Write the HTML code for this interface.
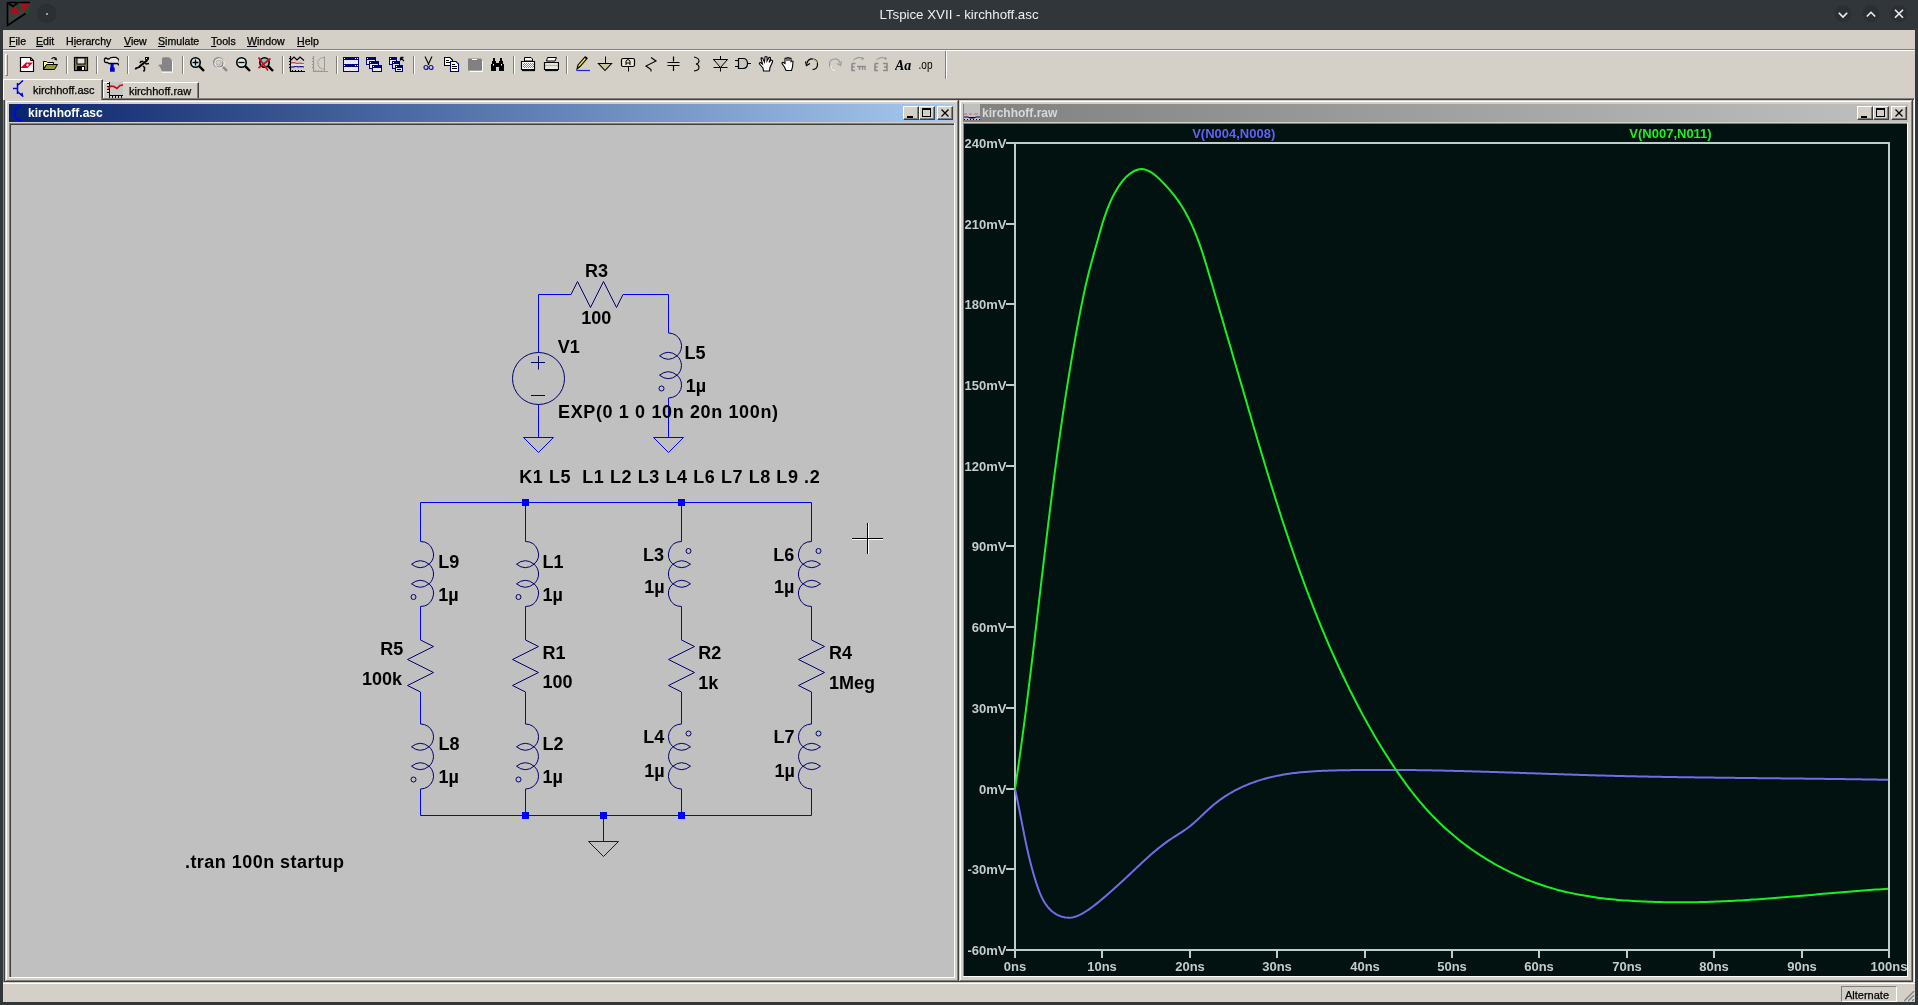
<!DOCTYPE html>
<html><head><meta charset="utf-8"><title>LTspice XVII - kirchhoff.asc</title>
<style>
*{box-sizing:border-box}
html,body{margin:0;padding:0}
body{-webkit-font-smoothing:antialiased;width:1918px;height:1005px;background:#31363b;position:relative;overflow:hidden;font-family:"Liberation Sans",sans-serif}
.a{position:absolute}
#titlebar{left:0;top:0;width:1918px;height:30px;background:#31363b}
#ttl{left:0;top:0;width:1918px;text-align:center;color:#eff0f1;font-size:13.3px;line-height:30px;top:-0.5px}
.kb{width:17px;height:17px;border-radius:50%;background:#2c3035;box-shadow:0 0 0 1px #2a2e32}
#app{left:3px;top:30px;width:1912px;height:972px;background:#d4d0c8}
.menu{font-size:10.6px;color:#000;top:35px;line-height:12px;-webkit-text-stroke:0.25px #000}
.menu u{text-decoration:underline;text-underline-offset:1px}
.sep{width:2px;height:18px;border-left:1px solid #808080;border-right:1px solid #fff;top:56px}
.ic{top:56px;width:16px;height:16px}
.win{background:#d4d0c8;border-top:1px solid #d4d0c8;border-left:1px solid #d4d0c8;border-right:1px solid #404040;border-bottom:1px solid #404040}
.win>.in{position:absolute;left:0;top:0;right:0;bottom:0;border-top:1px solid #fff;border-left:1px solid #fff;border-right:1px solid #808080;border-bottom:1px solid #808080}
.tb{height:18px}
.cap{font-size:12px;font-weight:bold;line-height:18px}
.btn{width:16px;height:14px;background:#d4d0c8;border-top:1px solid #fff;border-left:1px solid #fff;border-right:1px solid #404040;border-bottom:1px solid #404040;box-shadow:inset -1px -1px 0 #808080}
</style></head>
<body>
<div id="root" style="position:absolute;left:0;top:0;width:1918px;height:1005px;will-change:transform">
<div id="titlebar" class="a"></div>
<div id="ttl" class="a">LTspice XVII - kirchhoff.asc</div>
<!-- app icon -->
<svg class="a" style="left:0;top:0" width="34" height="30" viewBox="0 0 34 30">
 <path d="M7.5,2.5 H30 L24.5,13.5 L7.5,25.5 Z" fill="#3c403e"/>
 <path d="M8.5,3.5 L14,7 L11,12 Z M16,5 L19,4 L22,10 L17,10 Z M26,6 L31,3 L29,14 L25,15 Z" fill="#1e4a30"/>
 <path d="M10,13.5 H20 L16,7 H12.5 Z" fill="#a30f1f"/>
 <path d="M19.5,2.5 H30.5 L24,12.8 Z" fill="#a30f1f"/>
 <path d="M7.5,2.5 V25.5 L25.5,13.5 M7.5,2.5 H30 M7.5,2.5 L13,6.5 L18,2.5" fill="none" stroke="#000" stroke-width="1.7"/>
</svg>
<div class="a kb" style="left:38px;top:5px"></div>
<div class="a" style="left:46px;top:13px;width:2px;height:2px;background:#9aa0a6"></div>
<svg class="a" style="left:1830px;top:2px" width="85" height="26" viewBox="0 0 85 26">
 <circle cx="13" cy="11.7" r="8.5" fill="#2b2f34"/>
 <circle cx="41" cy="11.7" r="8.5" fill="#2b2f34"/>
 <circle cx="69" cy="11.7" r="8.5" fill="#2b2f34"/>
 <polyline points="8.8,10.8 13,15 17.2,10.8" stroke="#f0f0f0" stroke-width="1.6" fill="none"/>
 <polyline points="36.8,14.5 41,10.3 45.2,14.5" stroke="#f0f0f0" stroke-width="1.6" fill="none"/>
 <path d="M65,7.7 L73,15.7 M73,7.7 L65,15.7" stroke="#f0f0f0" stroke-width="1.6"/>
</svg>

<div id="app" class="a"></div>
<!-- menu -->
<div class="a menu" style="left:9px"><u>F</u>ile</div>
<div class="a menu" style="left:36px"><u>E</u>dit</div>
<div class="a menu" style="left:66px">H<u>i</u>erarchy</div>
<div class="a menu" style="left:124px"><u>V</u>iew</div>
<div class="a menu" style="left:158px"><u>S</u>imulate</div>
<div class="a menu" style="left:211px"><u>T</u>ools</div>
<div class="a menu" style="left:247px"><u>W</u>indow</div>
<div class="a menu" style="left:297px"><u>H</u>elp</div>
<div class="a" style="left:3px;top:49px;width:1912px;height:1px;background:#808080"></div>
<div class="a" style="left:3px;top:50px;width:1912px;height:1px;background:#fff"></div>
<!-- toolbar grip -->
<div class="a" style="left:5px;top:54px;width:3px;height:22px;border-left:1px solid #fff;border-top:1px solid #fff;border-right:1px solid #808080;border-bottom:1px solid #808080"></div>
<div class="a" style="left:945px;top:51px;width:2px;height:28px;border-left:1px solid #808080;border-right:1px solid #fff"></div>
<svg class="a" style="left:19px;top:55px" width="16" height="18" viewBox="0 0 16 18"><path d="M1.5,2.5 H11.5 L14.5,5.5 V16.5 H1.5 Z" fill="#fff" stroke="#000" stroke-width="1.2"/>
<path d="M11.5,2.5 V5.5 H14.5" fill="none" stroke="#000"/>
<path d="M7,7.5 H14 L8.5,13 H1.5 Z" fill="#e00020"/>
<path d="M8.5,8.5 L10,10 L8.5,11.5 L7,10 Z" fill="#fff"/></svg>
<svg class="a" style="left:42px;top:55px" width="16" height="18" viewBox="0 0 16 18"><path d="M1.5,6.5 H4.5 L5.5,7.5 H11.5 V9.5 H4.5 L1.5,14.5 Z" fill="#ffff99" stroke="#000"/>
<path d="M1.5,14.5 L4.5,9.5 H15.5 L12.5,14.5 Z" fill="#999933" stroke="#000"/>
<path d="M1.5,6.5 V14.5" stroke="#000"/>
<path d="M9.5,4 Q11.5,1.5 14,3.5" fill="none" stroke="#000" stroke-width="1.2"/>
<path d="M12,4.5 L15,5.5 L14.5,2.5 Z" fill="#000"/></svg>
<div class="a" style="left:66px;top:56px;width:1px;height:18px;background:#808080"></div><div class="a" style="left:67px;top:56px;width:1px;height:18px;background:#fff"></div>
<svg class="a" style="left:73px;top:55px" width="16" height="18" viewBox="0 0 16 18"><rect x="1.5" y="2.5" width="13" height="13" fill="#808040" stroke="#000" stroke-width="1.2"/>
<rect x="4" y="3" width="8" height="6" fill="#e0e0e0" stroke="#000"/>
<rect x="4" y="11" width="8" height="4.5" fill="#000"/>
<rect x="9" y="12" width="2" height="3" fill="#fff"/></svg>
<div class="a" style="left:96px;top:56px;width:1px;height:18px;background:#808080"></div><div class="a" style="left:97px;top:56px;width:1px;height:18px;background:#fff"></div>
<svg class="a" style="left:103px;top:55px" width="16" height="18" viewBox="0 0 16 18"><path d="M1.5,4.5 Q1.5,3 3,3 L4.5,4 H6 Q7,2.3 10,2.3 H13 L15.8,4.5 L16.5,7 V10.5 L14.5,8.5 H6 L4.5,7.5 H3 Q1.5,7.5 1.5,6 Z" fill="#e4e4e4" stroke="#000" stroke-width="1.3"/>
<path d="M7.5,9 H10.7 V12.5 H11.7 V16.8 H7 V12.5 H7.5 Z" fill="#0000c8"/></svg>
<div class="a" style="left:127px;top:56px;width:1px;height:18px;background:#808080"></div><div class="a" style="left:128px;top:56px;width:1px;height:18px;background:#fff"></div>
<svg class="a" style="left:134px;top:55px" width="16" height="18" viewBox="0 0 16 18"><rect x="11" y="2" width="4" height="2.8" fill="#000"/><rect x="12" y="3" width="1" height="1" fill="#fff"/>
<path d="M13.5,5 L5,12" stroke="#000" stroke-width="2.2"/>
<path d="M9.5,6.5 L7,6.5 L5.8,8" fill="none" stroke="#000" stroke-width="1.4"/>
<path d="M11.5,8 L12,9 L15,8.5" fill="none" stroke="#000" stroke-width="1.4"/>
<path d="M6,12 L2,13.2 L1.5,14.5" fill="none" stroke="#000" stroke-width="1.6"/>
<path d="M9,11 L10.5,12.5 L10.5,15 L9.5,16.5" fill="none" stroke="#000" stroke-width="1.5"/>
<path d="M3.5,5 L5,6 M5,3 L6.5,4" stroke="#b8b8b8" stroke-width="0.9"/></svg>
<svg class="a" style="left:157px;top:55px" width="16" height="18" viewBox="0 0 16 18"><path d="M5,3.5 Q5.5,2.3 7,2.3 H11 Q13,2.3 14,4 L15,6 V16.5 H5 L3,11.8 L1.3,10.5 L2.5,9.5 L5,9.5 Z" fill="#858585"/>
<path d="M15.5,6 V17.2 H5" fill="none" stroke="#fff"/></svg>
<div class="a" style="left:182px;top:56px;width:1px;height:18px;background:#808080"></div><div class="a" style="left:183px;top:56px;width:1px;height:18px;background:#fff"></div>
<svg class="a" style="left:189px;top:55px" width="16" height="18" viewBox="0 0 16 18"><circle cx="6.5" cy="7.5" r="4.7" fill="#d0e8e8" stroke="#000" stroke-width="1.6"/>
<path d="M10.2,11.2 L15,16" stroke="#000" stroke-width="2.4"/><path d="M6.5,4.5 V10.5 M3.5,7.5 H9.5" stroke="#000" stroke-width="1.3"/></svg>
<svg class="a" style="left:212px;top:55px" width="16" height="18" viewBox="0 0 16 18"><circle cx="6.5" cy="7.5" r="4.7" fill="none" stroke="#888" stroke-width="1.6"/>
<path d="M10.2,11.2 L15,16" stroke="#888" stroke-width="2.4"/><circle cx="7.5" cy="8.5" r="4.6" fill="none" stroke="#fff" stroke-width="1"/><circle cx="6.5" cy="7.5" r="2.5" fill="none" stroke="#aaa" stroke-width="0.8"/></svg>
<svg class="a" style="left:235px;top:55px" width="16" height="18" viewBox="0 0 16 18"><circle cx="6.5" cy="7.5" r="4.7" fill="#d0e8e8" stroke="#000" stroke-width="1.6"/>
<path d="M10.2,11.2 L15,16" stroke="#000" stroke-width="2.4"/><path d="M3.5,7.5 H9.5" stroke="#000" stroke-width="1.3"/></svg>
<svg class="a" style="left:258px;top:55px" width="16" height="18" viewBox="0 0 16 18"><circle cx="6.5" cy="7.5" r="4.7" fill="#70d0c0" stroke="#000" stroke-width="1.6"/>
<path d="M10.2,11.2 L15,16" stroke="#000" stroke-width="2.4"/><path d="M0.5,2.5 L10,15.5 M12.5,3.5 L0.5,13" stroke="#e00020" stroke-width="1.6"/></svg>
<div class="a" style="left:282px;top:56px;width:1px;height:18px;background:#808080"></div><div class="a" style="left:283px;top:56px;width:1px;height:18px;background:#fff"></div>
<svg class="a" style="left:289px;top:55px" width="16" height="18" viewBox="0 0 16 18"><path d="M1.5,1 V16.5 H16" fill="none" stroke="#000" stroke-width="1.2"/>
<path d="M0,3.5h2 M0,6.5h2 M0,9.5h2 M0,12.5h2 M3.5,15v2 M6.5,15v2 M9.5,15v2 M12.5,15v2" stroke="#000"/>
<polyline points="2,5 5,2 8,5 11,2 15,5.5" fill="none" stroke="#000" stroke-width="1.1"/>
<polyline points="2,8 5,7.5 8,8.5 11,8 15,9" fill="none" stroke="#e03030" stroke-width="1.2"/>
<polyline points="2,12 5,12 7,11 9,12 12,11.5 15,12" fill="none" stroke="#000080" stroke-width="1.2"/>
<rect x="2" y="9" width="13" height="2" fill="#e8d8e8"/></svg>
<svg class="a" style="left:312px;top:55px" width="16" height="18" viewBox="0 0 16 18"><path d="M1.5,1 V16.5 H16" fill="none" stroke="#999" stroke-width="1.2"/>
<path d="M0,3.5h2 M0,6.5h2 M0,9.5h2 M0,12.5h2 M3.5,15v2 M6.5,15v2 M9.5,15v2 M12.5,15v2" stroke="#999"/>
<path d="M12,2.5 Q5,3 6,9 Q7,14 12,14" fill="none" stroke="#999" stroke-width="1.1" stroke-dasharray="1.5,0.7"/>
<path d="M12.5,1.5 V15" stroke="#999"/></svg>
<div class="a" style="left:336px;top:56px;width:1px;height:18px;background:#808080"></div><div class="a" style="left:337px;top:56px;width:1px;height:18px;background:#fff"></div>
<svg class="a" style="left:343px;top:55px" width="16" height="18" viewBox="0 0 16 18"><g shape-rendering="crispEdges"><rect x="0" y="2" width="16" height="8" fill="#000080"/><rect x="1" y="5" width="14" height="4" fill="#e8e8f4"/><rect x="1" y="3" width="1" height="1" fill="#fff"/><rect x="12" y="3" width="1" height="1" fill="#fff"/><rect x="14" y="3" width="1" height="1" fill="#fff"/><rect x="0" y="9" width="16" height="8" fill="#000080"/><rect x="1" y="12" width="14" height="4" fill="#e8e8f4"/><rect x="1" y="10" width="1" height="1" fill="#fff"/><rect x="12" y="10" width="1" height="1" fill="#fff"/><rect x="14" y="10" width="1" height="1" fill="#fff"/></g></svg>
<svg class="a" style="left:366px;top:55px" width="16" height="18" viewBox="0 0 16 18"><g shape-rendering="crispEdges"><rect x="0" y="2" width="10" height="8" fill="#000080"/><rect x="1" y="5" width="8" height="4" fill="#e8e8f4"/><rect x="1" y="3" width="1" height="1" fill="#fff"/><rect x="3" y="6" width="10" height="8" fill="#000080"/><rect x="4" y="9" width="8" height="4" fill="#e8e8f4"/><rect x="4" y="7" width="1" height="1" fill="#fff"/><rect x="6" y="10" width="10" height="7" fill="#000080"/><rect x="7" y="13" width="8" height="3" fill="#e8e8f4"/><rect x="7" y="11" width="1" height="1" fill="#fff"/></g></svg>
<svg class="a" style="left:389px;top:55px" width="16" height="18" viewBox="0 0 16 18"><g shape-rendering="crispEdges"><rect x="0" y="2" width="8" height="8" fill="#000080"/><rect x="1" y="5" width="6" height="4" fill="#e8e8f4"/><rect x="1" y="3" width="1" height="1" fill="#fff"/><rect x="3" y="6" width="8" height="8" fill="#000080"/><rect x="4" y="9" width="6" height="4" fill="#e8e8f4"/><rect x="4" y="7" width="1" height="1" fill="#fff"/><rect x="6" y="10" width="8" height="7" fill="#000080"/><rect x="7" y="13" width="6" height="3" fill="#e8e8f4"/><rect x="7" y="11" width="1" height="1" fill="#fff"/><rect x="8" y="14" width="4" height="1" fill="#000"/></g><path d="M11.5,2.5 L15,6 M11.5,2.5 V5.5 M11.5,2.5 H14.5" stroke="#000" stroke-width="1.3" fill="none"/></svg>
<div class="a" style="left:413px;top:56px;width:1px;height:18px;background:#808080"></div><div class="a" style="left:414px;top:56px;width:1px;height:18px;background:#fff"></div>
<svg class="a" style="left:421px;top:55px" width="16" height="18" viewBox="0 0 16 18"><path d="M4,1.5 L8,10 M11,1.5 L7,10" stroke="#000" stroke-width="1.1"/>
<circle cx="5" cy="12.5" r="2" fill="none" stroke="#1010a0" stroke-width="1.2"/>
<circle cx="10" cy="12.5" r="2" fill="none" stroke="#1010a0" stroke-width="1.2"/></svg>
<svg class="a" style="left:444px;top:55px" width="16" height="18" viewBox="0 0 16 18"><path d="M0.5,2.5 H6 L8.5,5 V10.5 H0.5 Z" fill="#fff" stroke="#000" stroke-width="1.1"/>
<path d="M2,5.5h3 M2,7.5h4" stroke="#000"/>
<path d="M6.5,6.5 H12 L14.5,9 V16.5 H6.5 Z" fill="#fff" stroke="#000080" stroke-width="1.1"/>
<path d="M8,9.5h3 M8,11.5h5 M8,13.5h5" stroke="#000"/></svg>
<svg class="a" style="left:467px;top:55px" width="16" height="18" viewBox="0 0 16 18"><path d="M1,3.5 H14 L15,5 V15.5 H1 Z" fill="#808080"/>
<path d="M5,4.5h5" stroke="#fff"/><path d="M15.5,6 V16.5 H3" fill="none" stroke="#fff"/></svg>
<svg class="a" style="left:490px;top:55px" width="16" height="18" viewBox="0 0 16 18"><path d="M3,3 h2 v3 h1 v2 h3 v-2 h1 v-3 h2 v3 h1 v3 h1 v7 h-5 v-4 h-3 v4 h-5 v-7 h1 v-3 h1 z" fill="#000"/>
<path d="M3.5,9 v1.5 M11.5,9 v1.5" stroke="#fff"/></svg>
<div class="a" style="left:513px;top:56px;width:1px;height:18px;background:#808080"></div><div class="a" style="left:514px;top:56px;width:1px;height:18px;background:#fff"></div>
<svg class="a" style="left:520px;top:55px" width="16" height="18" viewBox="0 0 16 18"><defs><pattern id="hp" width="2" height="2" patternUnits="userSpaceOnUse"><rect width="1" height="1" fill="#000"/><rect x="1" y="1" width="1" height="1" fill="#000"/></pattern></defs>
<path d="M4.5,2.5 H11 L12.5,4 V6 H4.5 Z" fill="#fff" stroke="#000"/>
<path d="M1.5,6.5 H14.5 V14.5 H1.5 Z" fill="#fff" stroke="#000" stroke-width="1.2"/>
<rect x="3" y="8" width="11" height="5" fill="url(#hp)" opacity="0.45"/>
<path d="M2,15.5 H15" stroke="#000" stroke-width="1.3"/></svg>
<svg class="a" style="left:543px;top:55px" width="16" height="18" viewBox="0 0 16 18"><path d="M4.5,2.5 L13.5,2.5 L12,6 H3.5 Z" fill="#fff" stroke="#000"/>
<path d="M1.5,7.5 H15.5 V14.5 H1.5 Z" fill="#e8e8e8" stroke="#000" stroke-width="1.2"/>
<path d="M2,10.5 H15" stroke="#c0c040" stroke-width="1.2"/>
<path d="M2,15.5 H15" stroke="#000" stroke-width="1.2"/></svg>
<div class="a" style="left:566px;top:56px;width:1px;height:18px;background:#808080"></div><div class="a" style="left:567px;top:56px;width:1px;height:18px;background:#fff"></div>
<svg class="a" style="left:575px;top:55px" width="16" height="18" viewBox="0 0 16 18"><path d="M2,14 L3,10 L10,2 L12,3.5 L5,11.5 Z" fill="#f0e040" stroke="#000" stroke-width="1.1"/>
<path d="M10,2 L12,3.5" stroke="#000" stroke-width="1.6"/>
<path d="M1.5,15.5 H15" stroke="#2020e0" stroke-width="1.2"/></svg>
<svg class="a" style="left:597px;top:55px" width="16" height="18" viewBox="0 0 16 18"><path d="M8.5,1.5 V8" stroke="#000"/>
<path d="M1.5,8.5 H14.5 L8,15.5 Z" fill="#c8c8a0" stroke="#000" stroke-width="1.1"/></svg>
<svg class="a" style="left:620px;top:55px" width="16" height="18" viewBox="0 0 16 18"><rect x="1.5" y="3.5" width="13" height="8" rx="1.5" fill="#e8e8c8" stroke="#000" stroke-width="1.2"/>
<path d="M8.5,11.5 V16.5" stroke="#000"/>
<path d="M6,10 V6 L7,4.8 H9 L10,6 V10 M6,8 H10" fill="none" stroke="#000"/></svg>
<svg class="a" style="left:643px;top:55px" width="16" height="18" viewBox="0 0 16 18"><polyline points="8,2.5 13,6 3,11 8,14.5 8,16.5" fill="none" stroke="#000" stroke-width="1.1"/></svg>
<svg class="a" style="left:666px;top:55px" width="16" height="18" viewBox="0 0 16 18"><path d="M7.5,1.5 V6.5 M7.5,10.5 V16 M1.5,7.5 H13.5 M1.5,10.5 H13.5" stroke="#000" stroke-width="1.2"/></svg>
<svg class="a" style="left:689px;top:55px" width="16" height="18" viewBox="0 0 16 18"><path d="M5,2 Q10,3 10,6 Q10,8.5 7,9 Q10,9.5 10,12.5 Q10,15.5 5,16" fill="none" stroke="#000" stroke-width="1.1"/></svg>
<svg class="a" style="left:712px;top:55px" width="16" height="18" viewBox="0 0 16 18"><path d="M8.5,1 V16.5 M1,4.5 H15.5 M1.5,12.5 H15.5" stroke="#000" stroke-width="1"/>
<path d="M1.5,4.5 H15.5 L8.5,12.5 Z" fill="#c8c8c0" stroke="#000"/></svg>
<svg class="a" style="left:735px;top:55px" width="16" height="18" viewBox="0 0 16 18"><path d="M3.5,3.5 H8 Q12.5,3.5 12.5,8.5 Q12.5,13.5 8,13.5 H3.5 Z" fill="#c8c8c0" stroke="#000" stroke-width="1.2"/>
<path d="M0,5.5 H3 M0,11.5 H3 M12.5,8.5 H16" stroke="#000"/></svg>
<svg class="a" style="left:758px;top:55px" width="16" height="18" viewBox="0 0 16 18"><path d="M5,13 L1.5,9 Q1,7.5 2.5,7.5 L4.5,9 L3,3.5 Q3,2.5 4.5,3 L6.5,7 L7,2 Q8,1 9,2 L9,6 L11,2.5 Q12.5,2 12.5,3.5 L11,7.5 L13,5 Q15,5 14.5,7 L12,12.5 L11.5,16 H5.5 Z" fill="#fff" stroke="#000" stroke-width="1.1"/></svg>
<svg class="a" style="left:781px;top:55px" width="16" height="18" viewBox="0 0 16 18"><path d="M3.5,12 L1,8.5 Q1,7 2.5,7.5 L4,8.5 V3.5 Q5,2.5 6,3.5 V6 V3 Q7,2 8,3 V6 V3.5 Q9,2.5 10,3.5 V6.5 Q11,5.5 12,6.5 L11.5,12 L10.5,15.5 H5 Z" fill="#fff" stroke="#000" stroke-width="1.1"/></svg>
<svg class="a" style="left:804px;top:55px" width="16" height="18" viewBox="0 0 16 18"><path d="M3,8.5 Q4,3.5 9,4 Q14,5 13.5,10 Q13,14.5 8.5,14.5" fill="none" stroke="#000" stroke-width="1.2"/>
<path d="M9,4 Q12,5 13,8" fill="none" stroke="#c0c080" stroke-width="1.2"/>
<path d="M1.5,6.5 L2.5,10.5 L6,8.5" fill="none" stroke="#000" stroke-width="1.2"/></svg>
<svg class="a" style="left:827px;top:55px" width="16" height="18" viewBox="0 0 16 18"><path d="M13,8.5 Q12,3.5 7,4 Q2,5 2.5,10 Q3,14.5 7.5,14.5" fill="none" stroke="#9a9a9a" stroke-width="1.2"/>
<path d="M14.5,6.5 L13.5,10.5 L10,8.5" fill="none" stroke="#9a9a9a" stroke-width="1.2"/>
<path d="M3.5,11 Q4,15 8,15.5" fill="none" stroke="#fff"/></svg>
<svg class="a" style="left:850px;top:55px" width="16" height="18" viewBox="0 0 16 18"><path d="M2,8.5 H5.5 M2,8.5 V15.5 H5 M2,12 H4.5" fill="none" stroke="#8a8a8a" stroke-width="1.6"/>
<path d="M7,11.5 H15 V15 M9.5,11.5 V15 M12.5,11.5 V15" fill="none" stroke="#8a8a8a" stroke-width="1.3"/>
<path d="M3.5,5 Q8,1 13,3.5" fill="none" stroke="#8a8a8a"/><path d="M11.5,5 L14,4 L12.5,2 Z" fill="#8a8a8a"/></svg>
<svg class="a" style="left:873px;top:55px" width="16" height="18" viewBox="0 0 16 18"><path d="M2,8.5 H5.5 M2,8.5 V15.5 H5 M2,12 H4.5" fill="none" stroke="#8a8a8a" stroke-width="1.6"/>
<path d="M10,8.5 H14 V15.5 H10 M11,12 H14" fill="none" stroke="#8a8a8a" stroke-width="1.6"/>
<path d="M3.5,5 Q8,1 13,3.5" fill="none" stroke="#8a8a8a"/><path d="M11.5,5 L14,4 L12.5,2 Z" fill="#8a8a8a"/></svg>
<svg class="a" style="left:895px;top:55px" width="18" height="18" viewBox="0 0 18 18"><text x="0" y="15" font-family="Liberation Serif" font-style="italic" font-weight="bold" font-size="14" fill="#000">Aa</text></svg>
<svg class="a" style="left:918px;top:55px" width="18" height="18" viewBox="0 0 18 18"><text x="0.5" y="14" font-family="Liberation Sans" font-size="12" fill="#000" textLength="14" lengthAdjust="spacingAndGlyphs">.op</text></svg>
<!-- tabs -->
<div class="a" style="left:3px;top:99px;width:1912px;height:1px;background:#808080"></div>
<div class="a" style="left:103px;top:82px;width:96px;height:17px;background:#d4d0c8;border-top:1px solid #fff;border-left:1px solid #fff;border-right:1px solid #404040;box-shadow:inset -1px 0 0 #808080"></div>
<div class="a" style="left:3px;top:79px;width:100px;height:22px;background:#d4d0c8;border-top:1px solid #fff;border-left:1px solid #fff;border-right:1px solid #404040;box-shadow:inset -1px 0 0 #808080"></div>
<div class="a" style="left:33px;top:84px;font-size:11px;line-height:12px;-webkit-text-stroke:0.25px #000">kirchhoff.asc</div>
<div class="a" style="left:129px;top:85px;font-size:11px;line-height:12px;-webkit-text-stroke:0.25px #000">kirchhoff.raw</div>
<svg class="a" style="left:12px;top:80px" width="14" height="18" viewBox="0 0 14 18">
 <path d="M5.5,3 V14 M1,8.5 H5.5 M5.5,5.5 L11,0.5 M5.5,11.5 L11,16.5" stroke="#0000e0" stroke-width="1.5" fill="none"/>
 <path d="M7.5,14.5 L11.5,17 L10.5,12.5 Z" fill="#0000e0"/>
</svg>
<svg class="a" style="left:106px;top:82px" width="18" height="16" viewBox="0 0 18 16">
 <rect x="4" y="0" width="13" height="13" fill="#c4c8c8"/>
 <path d="M3.5,0 V13.5 H17 M1,1.5 H3.5 M1,4.5 H3.5 M1,7.5 H3.5 M1,10.5 H3.5 M3.5,13 V16 M6.5,13 V16 M9.5,13 V16 M12.5,13 V16 M15.5,13 V16" stroke="#000" fill="none"/>
 <polyline points="2,6.5 5,4 8,4.5 11,6.5 14,3.5 17,3" stroke="#e00000" stroke-width="1.6" fill="none"/>
</svg>
<!-- MDI frames -->
<div class="a" style="left:102px;top:98px;width:1812px;height:1px;background:#808080"></div>
<div class="a" style="left:102px;top:99px;width:1812px;height:1px;background:#404040"></div>
<div class="a" style="left:3px;top:100px;width:1px;height:882px;background:#808080"></div>
<div class="a" style="left:4px;top:100px;width:1px;height:882px;background:#404040"></div>
<div class="a" style="left:1913px;top:100px;width:1px;height:882px;background:#d4d0c8"></div>
<div class="a" style="left:1914px;top:99px;width:1px;height:884px;background:#fff"></div>
<div class="a" style="left:5px;top:100px;width:954px;height:882px;background:#d4d0c8"></div>
<div class="a" style="left:5px;top:100px;width:953px;height:1px;background:#d4d0c8"></div>
<div class="a" style="left:6px;top:101px;width:951px;height:1px;background:#fff"></div>
<div class="a" style="left:6px;top:101px;width:1px;height:879px;background:#fff"></div>
<div class="a" style="left:957px;top:101px;width:1px;height:880px;background:#808080"></div>
<div class="a" style="left:6px;top:980px;width:952px;height:1px;background:#808080"></div>
<div class="a" style="left:958px;top:100px;width:1px;height:882px;background:#404040"></div>
<div class="a" style="left:5px;top:981px;width:954px;height:1px;background:#404040"></div>
<div class="a" style="left:9px;top:104px;width:945px;height:18px;background:linear-gradient(to right,#0a246a,#a6caf0)"></div>
<div class="a" style="left:9px;top:123px;width:945px;height:1px;background:#808080"></div>
<div class="a" style="left:9px;top:123px;width:1px;height:854px;background:#808080"></div>
<div class="a" style="left:10px;top:124px;width:944px;height:1px;background:#404040"></div>
<div class="a" style="left:10px;top:124px;width:1px;height:853px;background:#404040"></div>
<div class="a" style="left:954px;top:123px;width:1px;height:855px;background:#fff"></div>
<div class="a" style="left:9px;top:977px;width:946px;height:1px;background:#fff"></div>
<div class="a" style="left:11px;top:125px;width:943px;height:852px;background:#c0c0c0"></div>
<div class="a" style="left:959px;top:100px;width:954px;height:882px;background:#d4d0c8"></div>
<div class="a" style="left:960px;top:101px;width:951px;height:1px;background:#fff"></div>
<div class="a" style="left:960px;top:101px;width:1px;height:879px;background:#fff"></div>
<div class="a" style="left:1911px;top:101px;width:1px;height:880px;background:#808080"></div>
<div class="a" style="left:960px;top:980px;width:952px;height:1px;background:#808080"></div>
<div class="a" style="left:1912px;top:100px;width:1px;height:882px;background:#404040"></div>
<div class="a" style="left:959px;top:981px;width:954px;height:1px;background:#404040"></div>
<div class="a" style="left:963px;top:104px;width:945px;height:18px;background:linear-gradient(to right,#808080,#c0c0c0)"></div>
<div class="a" style="left:963px;top:123px;width:944px;height:1px;background:#808080"></div>
<div class="a" style="left:963px;top:123px;width:1px;height:853px;background:#808080"></div>
<div class="a" style="left:1907px;top:123px;width:1px;height:854px;background:#fff"></div>
<div class="a" style="left:963px;top:976px;width:945px;height:1px;background:#fff"></div>
<div class="a" style="left:964px;top:124px;width:943px;height:852px;background:#011211"></div>
<div class="a" style="left:3px;top:982px;width:1912px;height:1px;background:#d4d0c8"></div>
<div class="a" style="left:3px;top:983px;width:1912px;height:1px;background:#fff"></div>
<svg class="a" style="left:12px;top:104px" width="12" height="18" viewBox="0 0 12 18">
 <path d="M3,5 L3,14 M3,6 L9,1 M3,13 L9,17" stroke="#0000ff" stroke-width="1.6"/>
</svg>
<div class="a cap" style="left:28px;top:104px;color:#fff">kirchhoff.asc</div>
<div class="a btn" style="left:903px;top:106px"></div>
<div class="a btn" style="left:919px;top:106px"></div>
<div class="a btn" style="left:937px;top:106px"></div>
<svg class="a" shape-rendering="crispEdges" style="left:903px;top:106px" width="50" height="14" viewBox="0 0 50 14">
 <path d="M4,10.5 h6" stroke="#000" stroke-width="2"/>
 <path d="M19.5,2.5 h8 v8 h-8 z M19.5,3.5 h8" stroke="#000" fill="none"/>
 <path d="M38.5,3.5 L45.5,10.5 M45.5,3.5 L38.5,10.5" stroke="#000" stroke-width="1.3" shape-rendering="auto"/>
</svg>
<!-- right child window -->
<svg class="a" style="left:964px;top:104px" width="16" height="16" viewBox="0 0 16 16">
 <rect x="0" y="0" width="16" height="16" fill="#c0c0c0"/>
 <path d="M0,10 h3 M5,10 h3 M10,10 h4" stroke="#e06060"/>
 <path d="M0,13 h4 L6,14 h4 L12,13 h4" stroke="#000080"/>
 <path d="M0,15.5h16" stroke="#000" stroke-dasharray="1,2"/>
</svg>
<div class="a cap" style="left:982px;top:104px;color:#d8d8d8">kirchhoff.raw</div>
<div class="a btn" style="left:1857px;top:106px"></div>
<div class="a btn" style="left:1873px;top:106px"></div>
<div class="a btn" style="left:1891px;top:106px"></div>
<svg class="a" shape-rendering="crispEdges" style="left:1857px;top:106px" width="50" height="14" viewBox="0 0 50 14">
 <path d="M4,10.5 h6" stroke="#000" stroke-width="2"/>
 <path d="M19.5,2.5 h8 v8 h-8 z M19.5,3.5 h8" stroke="#000" fill="none"/>
 <path d="M38.5,3.5 L45.5,10.5 M45.5,3.5 L38.5,10.5" stroke="#000" stroke-width="1.3" shape-rendering="auto"/>
</svg>
<!-- schematic & plot svg -->
<svg class="a" style="left:0;top:0" width="1918" height="1005" viewBox="0 0 1918 1005">
 <g fill="none" stroke-width="1">
<line x1="538.5" y1="294.5" x2="571.0" y2="294.5" stroke="#0000ff"/>
<line x1="623.0" y1="294.5" x2="668.5" y2="294.5" stroke="#0000ff"/>
<polyline points="571.0,294.5 577.5,281.5 590.5,307.5 603.5,281.5 616.5,307.5 623.0,294.5" stroke="#00006e"/>
<line x1="538.5" y1="294.5" x2="538.5" y2="352.5" stroke="#0000ff"/>
<line x1="668.5" y1="294.5" x2="668.5" y2="333.0" stroke="#0000ff"/>
<path d="M668.5,333.0 A13,13 0 0 1 677.1,355.8 A13,13 0 0 1 677.1,375.2 A13,13 0 0 1 668.5,398.0 M677.1,355.8 Q668.3,348.8 659.5,355.8 Q668.3,362.8 677.1,355.8 M677.1,375.2 Q668.3,368.2 659.5,375.2 Q668.3,382.2 677.1,375.2" stroke="#00006e"/>
<circle cx="661.5" cy="388.5" r="2.5" stroke="#00006e"/>
<line x1="668.5" y1="398.0" x2="668.5" y2="437.5" stroke="#0000ff"/>
<circle cx="538.5" cy="378.5" r="26" stroke="#00006e"/>
<line x1="531.0" y1="362.5" x2="545.0" y2="362.5" stroke="#00006e"/>
<line x1="538.5" y1="356.0" x2="538.5" y2="369.5" stroke="#00006e"/>
<line x1="531.0" y1="395.5" x2="545.0" y2="395.5" stroke="#00006e"/>
<line x1="538.5" y1="404.5" x2="538.5" y2="437.5" stroke="#0000ff"/>
<polygon points="523.5,437.5 553.5,437.5 538.5,452.5" stroke="#0000ff"/>
<polygon points="653.5,437.5 683.5,437.5 668.5,452.5" stroke="#0000ff"/>
<line x1="420.5" y1="502.5" x2="811.5" y2="502.5" stroke="#0000ff"/>
<line x1="420.5" y1="815.5" x2="811.5" y2="815.5" stroke="#0000ff"/>
<line x1="420.5" y1="502.5" x2="420.5" y2="541.5" stroke="#0000ff"/>
<path d="M420.5,541.5 A13,13 0 0 1 429.1,564.2 A13,13 0 0 1 429.1,583.8 A13,13 0 0 1 420.5,606.5 M429.1,564.2 Q420.3,557.2 411.5,564.2 Q420.3,571.2 429.1,564.2 M429.1,583.8 Q420.3,576.8 411.5,583.8 Q420.3,590.8 429.1,583.8" stroke="#00006e"/>
<circle cx="413.5" cy="597.0" r="2.5" stroke="#00006e"/>
<line x1="420.5" y1="606.5" x2="420.5" y2="640.0" stroke="#0000ff"/>
<polyline points="420.5,640.0 433.5,646.5 407.5,659.5 433.5,672.5 407.5,685.5 420.5,692.0" stroke="#00006e"/>
<line x1="420.5" y1="692.0" x2="420.5" y2="724.0" stroke="#0000ff"/>
<path d="M420.5,724.0 A13,13 0 0 1 429.1,746.8 A13,13 0 0 1 429.1,766.2 A13,13 0 0 1 420.5,789.0 M429.1,746.8 Q420.3,739.8 411.5,746.8 Q420.3,753.8 429.1,746.8 M429.1,766.2 Q420.3,759.2 411.5,766.2 Q420.3,773.2 429.1,766.2" stroke="#00006e"/>
<circle cx="413.5" cy="779.5" r="2.5" stroke="#00006e"/>
<line x1="420.5" y1="789.0" x2="420.5" y2="815.5" stroke="#0000ff"/>
<line x1="525.5" y1="502.5" x2="525.5" y2="541.5" stroke="#0000ff"/>
<path d="M525.5,541.5 A13,13 0 0 1 534.1,564.2 A13,13 0 0 1 534.1,583.8 A13,13 0 0 1 525.5,606.5 M534.1,564.2 Q525.3,557.2 516.5,564.2 Q525.3,571.2 534.1,564.2 M534.1,583.8 Q525.3,576.8 516.5,583.8 Q525.3,590.8 534.1,583.8" stroke="#00006e"/>
<circle cx="518.5" cy="597.0" r="2.5" stroke="#00006e"/>
<line x1="525.5" y1="606.5" x2="525.5" y2="640.0" stroke="#0000ff"/>
<polyline points="525.5,640.0 538.5,646.5 512.5,659.5 538.5,672.5 512.5,685.5 525.5,692.0" stroke="#00006e"/>
<line x1="525.5" y1="692.0" x2="525.5" y2="724.0" stroke="#0000ff"/>
<path d="M525.5,724.0 A13,13 0 0 1 534.1,746.8 A13,13 0 0 1 534.1,766.2 A13,13 0 0 1 525.5,789.0 M534.1,746.8 Q525.3,739.8 516.5,746.8 Q525.3,753.8 534.1,746.8 M534.1,766.2 Q525.3,759.2 516.5,766.2 Q525.3,773.2 534.1,766.2" stroke="#00006e"/>
<circle cx="518.5" cy="779.5" r="2.5" stroke="#00006e"/>
<line x1="525.5" y1="789.0" x2="525.5" y2="815.5" stroke="#0000ff"/>
<line x1="681.5" y1="502.5" x2="681.5" y2="541.5" stroke="#0000ff"/>
<path d="M681.5,606.5 A13,13 0 0 1 672.9,583.8 A13,13 0 0 1 672.9,564.2 A13,13 0 0 1 681.5,541.5 M672.9,583.8 Q681.7,590.8 690.5,583.8 Q681.7,576.8 672.9,583.8 M672.9,564.2 Q681.7,571.2 690.5,564.2 Q681.7,557.2 672.9,564.2" stroke="#00006e"/>
<circle cx="688.5" cy="551.0" r="2.5" stroke="#00006e"/>
<line x1="681.5" y1="606.5" x2="681.5" y2="640.0" stroke="#0000ff"/>
<polyline points="681.5,640.0 694.5,646.5 668.5,659.5 694.5,672.5 668.5,685.5 681.5,692.0" stroke="#00006e"/>
<line x1="681.5" y1="692.0" x2="681.5" y2="724.0" stroke="#0000ff"/>
<path d="M681.5,789.0 A13,13 0 0 1 672.9,766.2 A13,13 0 0 1 672.9,746.8 A13,13 0 0 1 681.5,724.0 M672.9,766.2 Q681.7,773.2 690.5,766.2 Q681.7,759.2 672.9,766.2 M672.9,746.8 Q681.7,753.8 690.5,746.8 Q681.7,739.8 672.9,746.8" stroke="#00006e"/>
<circle cx="688.5" cy="733.5" r="2.5" stroke="#00006e"/>
<line x1="681.5" y1="789.0" x2="681.5" y2="815.5" stroke="#0000ff"/>
<line x1="811.5" y1="502.5" x2="811.5" y2="541.5" stroke="#0000ff"/>
<path d="M811.5,606.5 A13,13 0 0 1 802.9,583.8 A13,13 0 0 1 802.9,564.2 A13,13 0 0 1 811.5,541.5 M802.9,583.8 Q811.7,590.8 820.5,583.8 Q811.7,576.8 802.9,583.8 M802.9,564.2 Q811.7,571.2 820.5,564.2 Q811.7,557.2 802.9,564.2" stroke="#00006e"/>
<circle cx="818.5" cy="551.0" r="2.5" stroke="#00006e"/>
<line x1="811.5" y1="606.5" x2="811.5" y2="640.0" stroke="#0000ff"/>
<polyline points="811.5,640.0 824.5,646.5 798.5,659.5 824.5,672.5 798.5,685.5 811.5,692.0" stroke="#00006e"/>
<line x1="811.5" y1="692.0" x2="811.5" y2="724.0" stroke="#0000ff"/>
<path d="M811.5,789.0 A13,13 0 0 1 802.9,766.2 A13,13 0 0 1 802.9,746.8 A13,13 0 0 1 811.5,724.0 M802.9,766.2 Q811.7,773.2 820.5,766.2 Q811.7,759.2 802.9,766.2 M802.9,746.8 Q811.7,753.8 820.5,746.8 Q811.7,739.8 802.9,746.8" stroke="#00006e"/>
<circle cx="818.5" cy="733.5" r="2.5" stroke="#00006e"/>
<line x1="811.5" y1="789.0" x2="811.5" y2="815.5" stroke="#0000ff"/>
<line x1="603.5" y1="815.5" x2="603.5" y2="841.5" stroke="#0000ff"/>
<polygon points="588.5,841.5 618.5,841.5 603.5,856.5" stroke="#0000ff"/>
<rect x="522.0" y="499.0" width="7" height="7" fill="#0000ff" stroke="none"/>
<rect x="678.0" y="499.0" width="7" height="7" fill="#0000ff" stroke="none"/>
<rect x="522.0" y="812.0" width="7" height="7" fill="#0000ff" stroke="none"/>
<rect x="600.0" y="812.0" width="7" height="7" fill="#0000ff" stroke="none"/>
<rect x="678.0" y="812.0" width="7" height="7" fill="#0000ff" stroke="none"/>
 </g>
 <g font-family="Liberation Sans" font-weight="bold" font-size="18" fill="#000">
<text x="585.0" y="276.5" xml:space="preserve">R3</text>
<text x="581.3" y="324.3" xml:space="preserve">100</text>
<text x="557.8" y="352.5" xml:space="preserve">V1</text>
<text x="684.6" y="358.8" xml:space="preserve">L5</text>
<text x="685.7" y="391.8" xml:space="preserve">1µ</text>
<text x="558.0" y="417.8" textLength="220" lengthAdjust="spacing" xml:space="preserve">EXP(0 1 0 10n 20n 100n)</text>
<text x="519.2" y="482.5" textLength="300.5" lengthAdjust="spacing" xml:space="preserve">K1 L5 &#160;L1 L2 L3 L4 L6 L7 L8 L9 .2</text>
<text x="438.3" y="567.9" xml:space="preserve">L9</text>
<text x="438.3" y="600.5" xml:space="preserve">1µ</text>
<text x="542.6" y="567.9" xml:space="preserve">L1</text>
<text x="542.6" y="600.5" xml:space="preserve">1µ</text>
<text x="643.1" y="560.7" xml:space="preserve">L3</text>
<text x="644.3" y="593.3" xml:space="preserve">1µ</text>
<text x="773.3" y="560.7" xml:space="preserve">L6</text>
<text x="774.1" y="593.3" xml:space="preserve">1µ</text>
<text x="380.2" y="655.4" xml:space="preserve">R5</text>
<text x="361.9" y="684.8" xml:space="preserve">100k</text>
<text x="542.6" y="658.6" xml:space="preserve">R1</text>
<text x="542.6" y="688.0" xml:space="preserve">100</text>
<text x="698.2" y="658.6" xml:space="preserve">R2</text>
<text x="698.2" y="688.9" xml:space="preserve">1k</text>
<text x="829.0" y="658.6" xml:space="preserve">R4</text>
<text x="829.0" y="688.9" xml:space="preserve">1Meg</text>
<text x="438.5" y="749.8" xml:space="preserve">L8</text>
<text x="438.5" y="782.8" xml:space="preserve">1µ</text>
<text x="542.6" y="749.8" xml:space="preserve">L2</text>
<text x="542.6" y="782.8" xml:space="preserve">1µ</text>
<text x="643.3" y="743.4" xml:space="preserve">L4</text>
<text x="644.2" y="776.6" xml:space="preserve">1µ</text>
<text x="773.4" y="743.4" xml:space="preserve">L7</text>
<text x="774.4" y="776.6" xml:space="preserve">1µ</text>
<text x="184.9" y="867.7" textLength="159" lengthAdjust="spacing" xml:space="preserve">.tran 100n startup</text>
 </g>
 <path d="M868.5,523 V554 M852,539.5 H883" stroke="#fff"/>
 <path d="M867.5,523 V554 M852,538.5 H883" stroke="#000"/>
  <g font-family="Liberation Sans" font-weight="bold" font-size="13" fill="#c4cccc">
<rect x="1015.0" y="143.0" width="874.0" height="807.0" stroke="#c0cccc" stroke-width="2" fill="none"/>
<line x1="1006" y1="143.0" x2="1015.0" y2="143.0" stroke="#c0cccc" stroke-width="2"/>
<text x="1006.5" y="148.0" text-anchor="end">240mV</text>
<line x1="1006" y1="224.0" x2="1015.0" y2="224.0" stroke="#c0cccc" stroke-width="2"/>
<text x="1006.5" y="229.0" text-anchor="end">210mV</text>
<line x1="1006" y1="304.0" x2="1015.0" y2="304.0" stroke="#c0cccc" stroke-width="2"/>
<text x="1006.5" y="309.0" text-anchor="end">180mV</text>
<line x1="1006" y1="385.0" x2="1015.0" y2="385.0" stroke="#c0cccc" stroke-width="2"/>
<text x="1006.5" y="390.0" text-anchor="end">150mV</text>
<line x1="1006" y1="466.0" x2="1015.0" y2="466.0" stroke="#c0cccc" stroke-width="2"/>
<text x="1006.5" y="471.0" text-anchor="end">120mV</text>
<line x1="1006" y1="546.0" x2="1015.0" y2="546.0" stroke="#c0cccc" stroke-width="2"/>
<text x="1006.5" y="551.0" text-anchor="end">90mV</text>
<line x1="1006" y1="627.0" x2="1015.0" y2="627.0" stroke="#c0cccc" stroke-width="2"/>
<text x="1006.5" y="632.0" text-anchor="end">60mV</text>
<line x1="1006" y1="708.0" x2="1015.0" y2="708.0" stroke="#c0cccc" stroke-width="2"/>
<text x="1006.5" y="713.0" text-anchor="end">30mV</text>
<line x1="1006" y1="789.0" x2="1015.0" y2="789.0" stroke="#c0cccc" stroke-width="2"/>
<text x="1006.5" y="794.0" text-anchor="end">0mV</text>
<line x1="1006" y1="869.0" x2="1015.0" y2="869.0" stroke="#c0cccc" stroke-width="2"/>
<text x="1006.5" y="874.0" text-anchor="end">-30mV</text>
<line x1="1006" y1="950.0" x2="1015.0" y2="950.0" stroke="#c0cccc" stroke-width="2"/>
<text x="1006.5" y="955.0" text-anchor="end">-60mV</text>
<line x1="1015.0" y1="950.0" x2="1015.0" y2="958" stroke="#c0cccc" stroke-width="2"/>
<text x="1015.0" y="971" text-anchor="middle">0ns</text>
<line x1="1102.0" y1="950.0" x2="1102.0" y2="958" stroke="#c0cccc" stroke-width="2"/>
<text x="1102.0" y="971" text-anchor="middle">10ns</text>
<line x1="1190.0" y1="950.0" x2="1190.0" y2="958" stroke="#c0cccc" stroke-width="2"/>
<text x="1190.0" y="971" text-anchor="middle">20ns</text>
<line x1="1277.0" y1="950.0" x2="1277.0" y2="958" stroke="#c0cccc" stroke-width="2"/>
<text x="1277.0" y="971" text-anchor="middle">30ns</text>
<line x1="1365.0" y1="950.0" x2="1365.0" y2="958" stroke="#c0cccc" stroke-width="2"/>
<text x="1365.0" y="971" text-anchor="middle">40ns</text>
<line x1="1452.0" y1="950.0" x2="1452.0" y2="958" stroke="#c0cccc" stroke-width="2"/>
<text x="1452.0" y="971" text-anchor="middle">50ns</text>
<line x1="1539.0" y1="950.0" x2="1539.0" y2="958" stroke="#c0cccc" stroke-width="2"/>
<text x="1539.0" y="971" text-anchor="middle">60ns</text>
<line x1="1627.0" y1="950.0" x2="1627.0" y2="958" stroke="#c0cccc" stroke-width="2"/>
<text x="1627.0" y="971" text-anchor="middle">70ns</text>
<line x1="1714.0" y1="950.0" x2="1714.0" y2="958" stroke="#c0cccc" stroke-width="2"/>
<text x="1714.0" y="971" text-anchor="middle">80ns</text>
<line x1="1802.0" y1="950.0" x2="1802.0" y2="958" stroke="#c0cccc" stroke-width="2"/>
<text x="1802.0" y="971" text-anchor="middle">90ns</text>
<line x1="1889.0" y1="950.0" x2="1889.0" y2="958" stroke="#c0cccc" stroke-width="2"/>
<text x="1889.0" y="971" text-anchor="middle">100ns</text>
 </g>
 <g font-family="Liberation Sans" font-weight="bold" font-size="13">
  <text x="1233.7" y="138" text-anchor="middle" fill="#6262f4">V(N004,N008)</text>
  <text x="1670.5" y="138" text-anchor="middle" fill="#20f020">V(N007,N011)</text>
 </g>
 <path d="M1014.99,788.88 L1015.37,790.60 L1015.75,792.31 L1016.11,794.02 L1016.48,795.72 L1016.84,797.41 L1017.19,799.10 L1017.54,800.79 L1017.88,802.47 L1018.22,804.15 L1018.56,805.82 L1018.89,807.49 L1019.22,809.16 L1019.55,810.82 L1019.88,812.48 L1020.20,814.14 L1020.52,815.79 L1020.84,817.44 L1021.16,819.09 L1021.48,820.73 L1021.80,822.38 L1022.11,824.02 L1022.43,825.66 L1022.75,827.29 L1023.07,828.93 L1023.39,830.56 L1023.72,832.19 L1024.04,833.83 L1024.37,835.46 L1024.70,837.09 L1025.03,838.72 L1025.37,840.35 L1025.71,841.98 L1026.05,843.61 L1026.40,845.24 L1026.75,846.87 L1027.11,848.50 L1027.47,850.13 L1027.84,851.76 L1028.22,853.39 L1028.60,855.03 L1028.98,856.66 L1029.38,858.30 L1029.78,859.94 L1030.19,861.58 L1030.61,863.23 L1031.03,864.87 L1031.47,866.52 L1031.91,868.17 L1032.36,869.83 L1032.82,871.49 L1033.29,873.15 L1033.78,874.81 L1034.27,876.48 L1034.77,878.15 L1035.29,879.82 L1035.81,881.50 L1036.35,883.19 L1036.90,884.87 L1037.47,886.55 L1038.06,888.23 L1038.67,889.89 L1039.30,891.54 L1039.96,893.18 L1040.65,894.79 L1041.37,896.38 L1042.12,897.94 L1042.90,899.47 L1043.73,900.96 L1044.59,902.42 L1045.50,903.83 L1046.45,905.20 L1047.45,906.52 L1048.50,907.78 L1049.60,908.99 L1050.75,910.14 L1051.96,911.22 L1053.23,912.24 L1054.56,913.19 L1055.95,914.06 L1057.40,914.85 L1058.88,915.55 L1060.41,916.17 L1061.98,916.68 L1063.57,917.10 L1065.18,917.42 L1066.81,917.62 L1068.44,917.71 L1070.08,917.68 L1071.71,917.53 L1073.34,917.24 L1074.95,916.83 L1076.54,916.30 L1078.12,915.67 L1079.68,914.95 L1081.22,914.16 L1082.75,913.31 L1084.25,912.41 L1085.74,911.48 L1087.20,910.53 L1088.64,909.55 L1090.07,908.56 L1091.47,907.55 L1092.87,906.52 L1094.24,905.47 L1095.61,904.41 L1096.96,903.35 L1098.29,902.27 L1099.62,901.18 L1100.94,900.09 L1102.25,898.99 L1103.56,897.89 L1104.85,896.79 L1106.14,895.68 L1107.43,894.57 L1108.70,893.46 L1109.98,892.35 L1111.24,891.23 L1112.50,890.11 L1113.76,888.98 L1115.01,887.86 L1116.26,886.73 L1117.51,885.60 L1118.75,884.46 L1119.99,883.33 L1121.22,882.19 L1122.45,881.05 L1123.68,879.91 L1124.91,878.76 L1126.14,877.61 L1127.37,876.47 L1128.59,875.32 L1129.82,874.16 L1131.05,873.01 L1132.27,871.85 L1133.50,870.70 L1134.72,869.54 L1135.95,868.38 L1137.18,867.22 L1138.41,866.06 L1139.65,864.90 L1140.89,863.74 L1142.13,862.59 L1143.37,861.44 L1144.62,860.29 L1145.87,859.14 L1147.13,858.00 L1148.39,856.86 L1149.66,855.73 L1150.93,854.61 L1152.21,853.49 L1153.50,852.38 L1154.79,851.28 L1156.09,850.19 L1157.40,849.11 L1158.72,848.04 L1160.05,846.98 L1161.38,845.93 L1162.73,844.90 L1164.08,843.88 L1165.45,842.87 L1166.83,841.87 L1168.21,840.89 L1169.61,839.93 L1171.02,838.98 L1172.44,838.04 L1173.87,837.12 L1175.30,836.20 L1176.73,835.29 L1178.17,834.38 L1179.60,833.46 L1181.02,832.54 L1182.43,831.61 L1183.84,830.67 L1185.22,829.71 L1186.60,828.73 L1187.95,827.73 L1189.28,826.71 L1190.59,825.66 L1191.89,824.60 L1193.17,823.51 L1194.43,822.41 L1195.68,821.29 L1196.93,820.17 L1198.16,819.03 L1199.39,817.88 L1200.62,816.73 L1201.84,815.57 L1203.06,814.42 L1204.28,813.26 L1205.51,812.10 L1206.74,810.95 L1207.98,809.80 L1209.22,808.66 L1210.48,807.54 L1211.75,806.42 L1213.03,805.32 L1214.33,804.23 L1215.64,803.16 L1216.98,802.11 L1218.33,801.08 L1219.70,800.07 L1221.08,799.08 L1222.48,798.10 L1223.89,797.14 L1225.32,796.21 L1226.77,795.29 L1228.22,794.39 L1229.69,793.51 L1231.17,792.65 L1232.67,791.80 L1234.17,790.98 L1235.68,790.17 L1237.21,789.39 L1238.74,788.62 L1240.29,787.87 L1241.84,787.14 L1243.39,786.43 L1244.96,785.74 L1246.53,785.07 L1248.11,784.42 L1249.70,783.79 L1251.29,783.18 L1252.88,782.58 L1254.48,782.01 L1256.08,781.45 L1257.68,780.91 L1259.29,780.40 L1260.90,779.89 L1262.52,779.41 L1264.14,778.94 L1265.76,778.49 L1267.39,778.06 L1269.02,777.64 L1270.65,777.24 L1272.29,776.86 L1273.93,776.49 L1275.57,776.13 L1277.22,775.79 L1278.87,775.46 L1280.52,775.15 L1282.17,774.85 L1283.83,774.57 L1285.49,774.29 L1287.15,774.03 L1288.81,773.78 L1290.48,773.55 L1292.15,773.32 L1293.82,773.11 L1295.49,772.90 L1297.17,772.71 L1298.84,772.53 L1300.52,772.35 L1302.20,772.19 L1303.88,772.04 L1305.57,771.89 L1307.25,771.76 L1308.94,771.63 L1310.62,771.51 L1312.31,771.39 L1314.00,771.29 L1315.69,771.19 L1317.39,771.10 L1319.08,771.01 L1320.77,770.93 L1322.47,770.85 L1324.16,770.78 L1325.86,770.72 L1327.56,770.66 L1329.25,770.60 L1330.95,770.55 L1332.65,770.50 L1334.35,770.46 L1336.05,770.41 L1337.74,770.37 L1339.44,770.33 L1341.14,770.30 L1342.84,770.26 L1344.54,770.23 L1346.24,770.20 L1347.93,770.17 L1349.63,770.14 L1351.33,770.11 L1353.03,770.09 L1354.72,770.07 L1356.42,770.04 L1358.12,770.02 L1359.82,770.00 L1361.51,769.99 L1363.21,769.97 L1364.91,769.96 L1366.60,769.94 L1368.30,769.93 L1370.00,769.92 L1371.69,769.91 L1373.39,769.90 L1375.08,769.90 L1376.78,769.89 L1378.48,769.89 L1380.17,769.89 L1381.87,769.89 L1383.56,769.89 L1385.26,769.89 L1386.96,769.89 L1388.65,769.90 L1390.35,769.90 L1392.04,769.91 L1393.74,769.91 L1395.43,769.92 L1397.13,769.93 L1398.82,769.95 L1400.52,769.96 L1402.21,769.97 L1403.91,769.99 L1405.60,770.00 L1407.30,770.02 L1408.99,770.04 L1410.68,770.06 L1412.38,770.08 L1414.07,770.10 L1415.77,770.12 L1417.46,770.14 L1419.16,770.17 L1420.85,770.19 L1422.54,770.22 L1424.24,770.25 L1425.93,770.27 L1427.62,770.30 L1429.32,770.33 L1431.01,770.36 L1432.70,770.40 L1434.40,770.43 L1436.09,770.46 L1437.79,770.50 L1439.48,770.53 L1441.17,770.57 L1442.86,770.60 L1444.56,770.64 L1446.25,770.68 L1447.94,770.72 L1449.64,770.76 L1451.33,770.80 L1453.02,770.84 L1454.72,770.88 L1456.41,770.92 L1458.10,770.97 L1459.79,771.01 L1461.49,771.05 L1463.18,771.10 L1464.87,771.15 L1466.56,771.19 L1468.26,771.24 L1469.95,771.29 L1471.64,771.33 L1473.33,771.38 L1475.03,771.43 L1476.72,771.48 L1478.41,771.53 L1480.10,771.58 L1481.80,771.63 L1483.49,771.68 L1485.18,771.73 L1486.87,771.79 L1488.56,771.84 L1490.26,771.89 L1491.95,771.95 L1493.64,772.00 L1495.33,772.05 L1497.02,772.11 L1498.72,772.16 L1500.41,772.22 L1502.10,772.27 L1503.79,772.33 L1505.48,772.38 L1507.18,772.44 L1508.87,772.50 L1510.56,772.55 L1512.25,772.61 L1513.94,772.67 L1515.63,772.72 L1517.33,772.78 L1519.02,772.84 L1520.71,772.90 L1522.40,772.95 L1524.09,773.01 L1525.79,773.07 L1527.48,773.13 L1529.17,773.19 L1530.86,773.24 L1532.55,773.30 L1534.24,773.36 L1535.94,773.42 L1537.63,773.48 L1539.32,773.53 L1541.01,773.59 L1542.70,773.65 L1544.40,773.71 L1546.09,773.77 L1547.78,773.82 L1549.47,773.88 L1551.16,773.94 L1552.86,774.00 L1554.55,774.05 L1556.24,774.11 L1557.93,774.17 L1559.62,774.22 L1561.32,774.28 L1563.01,774.33 L1564.70,774.39 L1566.39,774.45 L1568.08,774.50 L1569.78,774.56 L1571.47,774.61 L1573.16,774.67 L1574.85,774.72 L1576.54,774.77 L1578.24,774.83 L1579.93,774.88 L1581.62,774.93 L1583.31,774.99 L1585.01,775.04 L1586.70,775.09 L1588.39,775.14 L1590.08,775.19 L1591.78,775.24 L1593.47,775.29 L1595.16,775.34 L1596.85,775.39 L1598.55,775.43 L1600.24,775.48 L1601.93,775.53 L1603.63,775.58 L1605.32,775.62 L1607.01,775.67 L1608.71,775.71 L1610.40,775.76 L1612.09,775.80 L1613.78,775.84 L1615.48,775.88 L1617.17,775.93 L1618.86,775.97 L1620.56,776.01 L1622.25,776.05 L1623.94,776.09 L1625.64,776.13 L1627.33,776.17 L1629.03,776.20 L1630.72,776.24 L1632.41,776.28 L1634.11,776.32 L1635.80,776.35 L1637.49,776.39 L1639.19,776.42 L1640.88,776.46 L1642.57,776.49 L1644.27,776.53 L1645.96,776.56 L1647.66,776.60 L1649.35,776.63 L1651.04,776.66 L1652.74,776.69 L1654.43,776.72 L1656.13,776.76 L1657.82,776.79 L1659.51,776.82 L1661.21,776.85 L1662.90,776.88 L1664.60,776.91 L1666.29,776.94 L1667.99,776.96 L1669.68,776.99 L1671.37,777.02 L1673.07,777.05 L1674.76,777.08 L1676.46,777.10 L1678.15,777.13 L1679.85,777.16 L1681.54,777.18 L1683.24,777.21 L1684.93,777.23 L1686.62,777.26 L1688.32,777.28 L1690.01,777.31 L1691.71,777.33 L1693.40,777.36 L1695.10,777.38 L1696.79,777.40 L1698.49,777.43 L1700.18,777.45 L1701.88,777.47 L1703.57,777.49 L1705.26,777.52 L1706.96,777.54 L1708.65,777.56 L1710.35,777.58 L1712.04,777.60 L1713.74,777.62 L1715.43,777.65 L1717.13,777.67 L1718.82,777.69 L1720.52,777.71 L1722.21,777.73 L1723.91,777.75 L1725.60,777.77 L1727.29,777.79 L1728.99,777.81 L1730.68,777.83 L1732.38,777.85 L1734.07,777.87 L1735.77,777.89 L1737.46,777.90 L1739.16,777.92 L1740.85,777.94 L1742.55,777.96 L1744.24,777.98 L1745.94,778.00 L1747.63,778.02 L1749.33,778.03 L1751.02,778.05 L1752.71,778.07 L1754.41,778.09 L1756.10,778.11 L1757.80,778.13 L1759.49,778.14 L1761.19,778.16 L1762.88,778.18 L1764.58,778.20 L1766.27,778.22 L1767.97,778.23 L1769.66,778.25 L1771.35,778.27 L1773.05,778.29 L1774.74,778.30 L1776.44,778.32 L1778.13,778.34 L1779.83,778.36 L1781.52,778.38 L1783.21,778.39 L1784.91,778.41 L1786.60,778.43 L1788.30,778.45 L1789.99,778.47 L1791.69,778.49 L1793.38,778.50 L1795.07,778.52 L1796.77,778.54 L1798.46,778.56 L1800.16,778.58 L1801.85,778.60 L1803.55,778.62 L1805.24,778.64 L1806.93,778.65 L1808.63,778.67 L1810.32,778.69 L1812.01,778.71 L1813.71,778.73 L1815.40,778.75 L1817.10,778.77 L1818.79,778.79 L1820.48,778.81 L1822.18,778.83 L1823.87,778.86 L1825.56,778.88 L1827.26,778.90 L1828.95,778.92 L1830.64,778.94 L1832.34,778.96 L1834.03,778.98 L1835.73,779.01 L1837.42,779.03 L1839.11,779.05 L1840.80,779.07 L1842.50,779.10 L1844.19,779.12 L1845.88,779.14 L1847.58,779.17 L1849.27,779.19 L1850.96,779.22 L1852.66,779.24 L1854.35,779.27 L1856.04,779.29 L1857.73,779.32 L1859.43,779.34 L1861.12,779.37 L1862.81,779.39 L1864.51,779.42 L1866.20,779.45 L1867.89,779.48 L1869.58,779.50 L1871.27,779.53 L1872.97,779.56 L1874.66,779.59 L1876.35,779.62 L1878.04,779.65 L1879.74,779.68 L1881.43,779.71 L1883.12,779.74 L1884.81,779.77 L1886.50,779.80 L1888.19,779.83" fill="none" stroke="#6e6ee8" stroke-width="2" stroke-linejoin="round"/>
 <path d="M1015.01,789.00 L1015.46,785.96 L1015.91,782.92 L1016.36,779.87 L1016.81,776.83 L1017.25,773.78 L1017.69,770.74 L1018.13,767.69 L1018.56,764.65 L1019.00,761.60 L1019.42,758.55 L1019.85,755.51 L1020.27,752.46 L1020.69,749.41 L1021.11,746.36 L1021.53,743.32 L1021.94,740.27 L1022.35,737.22 L1022.76,734.17 L1023.17,731.12 L1023.57,728.07 L1023.97,725.02 L1024.37,721.97 L1024.77,718.92 L1025.17,715.87 L1025.56,712.82 L1025.95,709.77 L1026.34,706.72 L1026.73,703.67 L1027.11,700.62 L1027.50,697.56 L1027.88,694.51 L1028.26,691.46 L1028.64,688.41 L1029.02,685.36 L1029.40,682.30 L1029.77,679.25 L1030.15,676.20 L1030.52,673.14 L1030.89,670.09 L1031.26,667.04 L1031.63,663.98 L1032.00,660.93 L1032.37,657.88 L1032.73,654.82 L1033.10,651.77 L1033.46,648.71 L1033.82,645.66 L1034.19,642.60 L1034.55,639.55 L1034.91,636.49 L1035.27,633.44 L1035.63,630.38 L1035.99,627.33 L1036.35,624.27 L1036.71,621.22 L1037.07,618.16 L1037.43,615.11 L1037.78,612.05 L1038.14,609.00 L1038.50,605.94 L1038.86,602.89 L1039.22,599.83 L1039.57,596.78 L1039.93,593.72 L1040.29,590.66 L1040.65,587.61 L1041.01,584.55 L1041.37,581.50 L1041.72,578.44 L1042.08,575.39 L1042.44,572.33 L1042.80,569.28 L1043.17,566.22 L1043.53,563.16 L1043.89,560.11 L1044.25,557.05 L1044.62,554.00 L1044.98,550.94 L1045.35,547.89 L1045.71,544.83 L1046.08,541.78 L1046.45,538.72 L1046.82,535.67 L1047.19,532.61 L1047.56,529.56 L1047.93,526.50 L1048.30,523.45 L1048.68,520.40 L1049.06,517.34 L1049.43,514.29 L1049.81,511.24 L1050.19,508.18 L1050.58,505.13 L1050.96,502.08 L1051.34,499.03 L1051.73,495.97 L1052.12,492.92 L1052.51,489.87 L1052.90,486.82 L1053.30,483.77 L1053.69,480.72 L1054.09,477.67 L1054.49,474.62 L1054.89,471.57 L1055.30,468.52 L1055.70,465.47 L1056.11,462.42 L1056.52,459.37 L1056.93,456.32 L1057.35,453.27 L1057.77,450.23 L1058.19,447.18 L1058.61,444.13 L1059.04,441.09 L1059.46,438.04 L1059.89,435.00 L1060.33,431.95 L1060.76,428.91 L1061.20,425.86 L1061.64,422.82 L1062.09,419.78 L1062.53,416.73 L1062.98,413.69 L1063.44,410.65 L1063.89,407.61 L1064.35,404.57 L1064.81,401.53 L1065.28,398.49 L1065.75,395.45 L1066.22,392.41 L1066.70,389.37 L1067.17,386.34 L1067.66,383.30 L1068.14,380.26 L1068.63,377.23 L1069.13,374.19 L1069.62,371.16 L1070.12,368.13 L1070.63,365.09 L1071.13,362.06 L1071.65,359.03 L1072.16,356.00 L1072.68,352.97 L1073.20,349.94 L1073.73,346.91 L1074.26,343.88 L1074.80,340.85 L1075.34,337.83 L1075.88,334.80 L1076.43,331.77 L1076.98,328.75 L1077.54,325.73 L1078.10,322.70 L1078.67,319.68 L1079.25,316.66 L1079.83,313.64 L1080.42,310.62 L1081.02,307.61 L1081.62,304.59 L1082.24,301.58 L1082.87,298.57 L1083.50,295.56 L1084.15,292.56 L1084.81,289.55 L1085.49,286.55 L1086.17,283.55 L1086.88,280.56 L1087.59,277.56 L1088.32,274.57 L1089.07,271.59 L1089.83,268.60 L1090.61,265.62 L1091.41,262.65 L1092.21,259.67 L1093.03,256.70 L1093.86,253.73 L1094.69,250.77 L1095.53,247.80 L1096.37,244.84 L1097.20,241.88 L1098.04,238.92 L1098.87,235.97 L1099.70,233.02 L1100.54,230.07 L1101.39,227.13 L1102.27,224.19 L1103.16,221.27 L1104.09,218.36 L1105.06,215.46 L1106.06,212.57 L1107.11,209.70 L1108.22,206.85 L1109.39,204.02 L1110.61,201.20 L1111.91,198.41 L1113.29,195.65 L1114.75,192.90 L1116.29,190.19 L1117.93,187.50 L1119.66,184.87 L1121.51,182.32 L1123.47,179.89 L1125.56,177.60 L1127.79,175.49 L1130.15,173.58 L1132.67,171.91 L1135.35,170.50 L1138.16,169.48 L1141.05,169.07 L1143.95,169.33 L1146.77,170.12 L1149.48,171.32 L1152.08,172.87 L1154.59,174.69 L1157.01,176.73 L1159.35,178.91 L1161.63,181.17 L1163.84,183.46 L1166.00,185.77 L1168.10,188.10 L1170.14,190.45 L1172.13,192.83 L1174.05,195.24 L1175.91,197.67 L1177.71,200.14 L1179.45,202.64 L1181.12,205.18 L1182.74,207.76 L1184.30,210.36 L1185.80,213.00 L1187.26,215.67 L1188.66,218.37 L1190.01,221.09 L1191.32,223.84 L1192.58,226.62 L1193.80,229.42 L1194.99,232.24 L1196.13,235.08 L1197.25,237.94 L1198.33,240.82 L1199.38,243.71 L1200.40,246.62 L1201.40,249.54 L1202.38,252.47 L1203.33,255.42 L1204.27,258.37 L1205.19,261.33 L1206.10,264.29 L1206.99,267.26 L1207.88,270.23 L1208.76,273.21 L1209.63,276.18 L1210.51,279.15 L1211.38,282.12 L1212.25,285.09 L1213.12,288.06 L1213.99,291.02 L1214.86,293.98 L1215.73,296.94 L1216.60,299.90 L1217.47,302.86 L1218.34,305.81 L1219.20,308.77 L1220.07,311.72 L1220.94,314.67 L1221.80,317.62 L1222.67,320.57 L1223.53,323.52 L1224.40,326.46 L1225.26,329.41 L1226.12,332.36 L1226.99,335.30 L1227.85,338.24 L1228.71,341.19 L1229.58,344.13 L1230.44,347.07 L1231.30,350.02 L1232.16,352.96 L1233.02,355.90 L1233.88,358.85 L1234.74,361.79 L1235.60,364.73 L1236.46,367.67 L1237.32,370.62 L1238.18,373.56 L1239.04,376.51 L1239.90,379.45 L1240.76,382.40 L1241.62,385.35 L1242.47,388.30 L1243.33,391.24 L1244.19,394.19 L1245.05,397.14 L1245.91,400.09 L1246.77,403.05 L1247.63,406.00 L1248.49,408.95 L1249.35,411.90 L1250.21,414.85 L1251.08,417.80 L1251.94,420.76 L1252.81,423.71 L1253.67,426.66 L1254.54,429.61 L1255.41,432.57 L1256.28,435.52 L1257.15,438.47 L1258.03,441.42 L1258.90,444.38 L1259.78,447.33 L1260.66,450.28 L1261.54,453.23 L1262.43,456.18 L1263.31,459.13 L1264.20,462.08 L1265.09,465.03 L1265.98,467.98 L1266.88,470.93 L1267.78,473.87 L1268.68,476.82 L1269.58,479.77 L1270.49,482.71 L1271.40,485.65 L1272.31,488.60 L1273.23,491.54 L1274.15,494.48 L1275.07,497.42 L1275.99,500.36 L1276.92,503.30 L1277.86,506.23 L1278.80,509.17 L1279.74,512.10 L1280.68,515.03 L1281.63,517.96 L1282.59,520.89 L1283.54,523.82 L1284.51,526.74 L1285.47,529.67 L1286.44,532.59 L1287.42,535.51 L1288.40,538.43 L1289.38,541.35 L1290.37,544.26 L1291.37,547.18 L1292.37,550.09 L1293.37,553.00 L1294.38,555.91 L1295.40,558.81 L1296.42,561.71 L1297.45,564.62 L1298.48,567.51 L1299.52,570.41 L1300.56,573.30 L1301.61,576.20 L1302.67,579.08 L1303.73,581.97 L1304.80,584.86 L1305.87,587.74 L1306.96,590.62 L1308.04,593.49 L1309.14,596.36 L1310.24,599.23 L1311.35,602.10 L1312.46,604.97 L1313.58,607.83 L1314.71,610.69 L1315.84,613.54 L1316.99,616.40 L1318.14,619.25 L1319.29,622.09 L1320.46,624.93 L1321.63,627.77 L1322.81,630.61 L1324.00,633.44 L1325.19,636.27 L1326.40,639.10 L1327.61,641.92 L1328.83,644.74 L1330.06,647.56 L1331.29,650.37 L1332.54,653.18 L1333.79,655.98 L1335.05,658.78 L1336.33,661.58 L1337.60,664.37 L1338.89,667.16 L1340.19,669.94 L1341.50,672.72 L1342.81,675.50 L1344.14,678.27 L1345.47,681.04 L1346.81,683.80 L1348.17,686.56 L1349.53,689.32 L1350.90,692.07 L1352.28,694.81 L1353.68,697.56 L1355.08,700.29 L1356.49,703.02 L1357.91,705.75 L1359.35,708.47 L1360.79,711.19 L1362.24,713.90 L1363.71,716.61 L1365.19,719.31 L1366.67,722.01 L1368.17,724.69 L1369.69,727.38 L1371.21,730.05 L1372.74,732.72 L1374.29,735.38 L1375.85,738.04 L1377.42,740.68 L1379.01,743.32 L1380.61,745.96 L1382.22,748.58 L1383.84,751.20 L1385.48,753.81 L1387.13,756.41 L1388.80,759.00 L1390.48,761.58 L1392.17,764.15 L1393.88,766.72 L1395.60,769.27 L1397.34,771.82 L1399.09,774.35 L1400.86,776.87 L1402.65,779.39 L1404.45,781.89 L1406.27,784.37 L1408.11,786.85 L1409.96,789.30 L1411.84,791.74 L1413.74,794.17 L1415.66,796.58 L1417.60,798.97 L1419.56,801.33 L1421.54,803.68 L1423.55,806.01 L1425.59,808.32 L1427.64,810.60 L1429.73,812.86 L1431.84,815.10 L1433.97,817.31 L1436.13,819.50 L1438.32,821.66 L1440.53,823.80 L1442.76,825.91 L1445.02,827.99 L1447.31,830.05 L1449.61,832.09 L1451.94,834.09 L1454.30,836.08 L1456.67,838.03 L1459.07,839.96 L1461.49,841.86 L1463.93,843.73 L1466.39,845.58 L1468.87,847.40 L1471.37,849.19 L1473.89,850.95 L1476.43,852.68 L1478.99,854.39 L1481.57,856.07 L1484.17,857.71 L1486.79,859.33 L1489.42,860.92 L1492.08,862.48 L1494.75,864.01 L1497.43,865.51 L1500.13,866.98 L1502.85,868.42 L1505.59,869.82 L1508.34,871.20 L1511.10,872.55 L1513.89,873.86 L1516.68,875.14 L1519.49,876.40 L1522.31,877.61 L1525.15,878.80 L1528.00,879.96 L1530.86,881.08 L1533.74,882.17 L1536.62,883.22 L1539.52,884.25 L1542.43,885.23 L1545.35,886.19 L1548.28,887.11 L1551.22,888.00 L1554.18,888.85 L1557.14,889.67 L1560.11,890.45 L1563.09,891.21 L1566.08,891.92 L1569.07,892.61 L1572.08,893.27 L1575.09,893.89 L1578.11,894.49 L1581.14,895.05 L1584.17,895.59 L1587.21,896.10 L1590.25,896.59 L1593.30,897.05 L1596.35,897.48 L1599.41,897.89 L1602.47,898.27 L1605.54,898.64 L1608.61,898.98 L1611.68,899.30 L1614.76,899.60 L1617.84,899.88 L1620.92,900.14 L1624.00,900.38 L1627.08,900.60 L1630.16,900.81 L1633.25,901.00 L1636.33,901.18 L1639.41,901.34 L1642.50,901.49 L1645.58,901.62 L1648.66,901.75 L1651.74,901.86 L1654.82,901.96 L1657.89,902.04 L1660.97,902.11 L1664.05,902.18 L1667.12,902.23 L1670.19,902.27 L1673.27,902.29 L1676.34,902.31 L1679.41,902.32 L1682.48,902.31 L1685.55,902.29 L1688.62,902.27 L1691.69,902.23 L1694.76,902.19 L1697.83,902.13 L1700.90,902.06 L1703.96,901.99 L1707.03,901.90 L1710.10,901.81 L1713.16,901.71 L1716.23,901.59 L1719.30,901.47 L1722.36,901.34 L1725.43,901.21 L1728.50,901.06 L1731.56,900.91 L1734.63,900.75 L1737.70,900.58 L1740.76,900.40 L1743.83,900.22 L1746.90,900.03 L1749.97,899.83 L1753.03,899.62 L1756.10,899.41 L1759.17,899.20 L1762.24,898.97 L1765.31,898.75 L1768.37,898.52 L1771.44,898.28 L1774.51,898.04 L1777.58,897.79 L1780.65,897.54 L1783.72,897.29 L1786.79,897.04 L1789.86,896.78 L1792.92,896.52 L1795.99,896.25 L1799.06,895.99 L1802.13,895.72 L1805.20,895.45 L1808.27,895.19 L1811.34,894.92 L1814.41,894.65 L1817.47,894.37 L1820.54,894.10 L1823.61,893.83 L1826.68,893.57 L1829.75,893.30 L1832.82,893.03 L1835.88,892.77 L1838.95,892.50 L1842.02,892.24 L1845.08,891.99 L1848.15,891.73 L1851.22,891.48 L1854.28,891.23 L1857.35,890.98 L1860.42,890.74 L1863.48,890.51 L1866.55,890.28 L1869.61,890.05 L1872.67,889.83 L1875.74,889.61 L1878.80,889.40 L1881.87,889.20 L1884.93,889.00 L1887.99,888.81" fill="none" stroke="#18f020" stroke-width="2" stroke-linejoin="round"/>
</svg>

<!-- status bar -->
<div class="a" style="left:3px;top:983px;width:1912px;height:1px;background:#fff"></div>
<div class="a" style="left:1841px;top:986px;width:56px;height:16px;border-top:1px solid #808080;border-left:1px solid #808080;border-right:1px solid #fff;border-bottom:1px solid #fff"></div>
<div class="a" style="left:1845px;top:989px;font-size:11px;line-height:12px;-webkit-text-stroke:0.25px #000">Alternate</div>
<svg class="a" style="left:1900px;top:987px" width="15" height="15" viewBox="0 0 15 15">
 <path d="M14,3 L3,14 M14,7 L7,14 M14,11 L11,14" stroke="#fff"/>
 <path d="M14,4 L4,14 M14,8 L8,14 M14,12 L12,14" stroke="#808080" stroke-width="1.5"/>
</svg>
</div>
</body></html>
